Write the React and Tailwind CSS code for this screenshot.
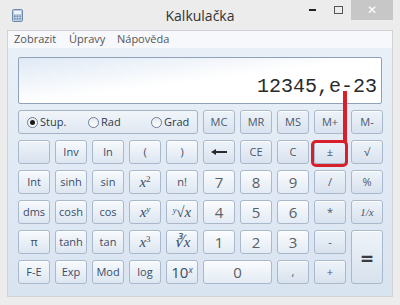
import React from 'react';

const ui = { fontFamily: '"Open Sans", "Noto Sans", sans-serif' };

const Btn = ({ children, kind = 'fn', className = '' }) => {
  const skin =
    kind === 'num'
      ? 'from-[#fbfcfe] to-[#e3ebf4] text-[#5a5f66] text-[15px]'
      : kind === 'op'
      ? 'from-[#eef3f9] to-[#d8e2ee] text-[#4a586a] text-[11px]'
      : 'from-[#f7fafd] to-[#dde6f1] text-[#3a4d66] text-[11px]';
  return (
    <div
      className={`flex items-center justify-center rounded-[3px] border border-[#a9b8ca] bg-linear-to-b shadow-[inset_0_1px_0_#ffffff] ${skin} ${className}`}
    >
      {children}
    </div>
  );
};

const Mx = ({ children }) => (
  <span className="text-[15px] italic text-[#3a4d66]" style={{ fontFamily: '"Liberation Serif", serif' }}>
    {children}
  </span>
);

const Radio = ({ on, label }) => (
  <div className="flex items-center gap-[2px]">
    <span className="flex h-[11px] w-[11px] items-center justify-center rounded-full border border-[#6d7f95] bg-linear-to-b from-[#e6ebf1] to-white">
      {on && <span className="h-[5px] w-[5px] rounded-full bg-[#1a1a1a]" />}
    </span>
    <span className="text-[11px] text-[#2b3a4d]">{label}</span>
  </div>
);

export default function App() {
  return (
    <div className="relative h-[305px] w-[400px] overflow-hidden bg-[#ececec]" style={ui}>
      {/* title bar */}
      <div className="relative flex h-[30px] items-center">
        <svg className="ml-[12px]" width="11" height="13" viewBox="0 0 11 13">
          <rect x="0.5" y="0.5" width="10" height="12" rx="1" fill="#b9cbe0" stroke="#6f8aa8" />
          <rect x="2" y="2" width="7" height="3" fill="#eef4fb" />
          <g fill="#6f8aa8">
            <rect x="2" y="6.5" width="1.5" height="1.5" /><rect x="4.7" y="6.5" width="1.5" height="1.5" /><rect x="7.4" y="6.5" width="1.5" height="1.5" />
            <rect x="2" y="9" width="1.5" height="1.5" /><rect x="4.7" y="9" width="1.5" height="1.5" /><rect x="7.4" y="9" width="1.5" height="1.5" />
          </g>
        </svg>
        <div className="absolute left-0 right-0 top-[5px] text-center text-[14px] text-[#333]">Kalkulačka</div>
        <div className="absolute right-[7px] top-0 flex h-[20px] items-start">
          <div className="flex h-[20px] w-[26px] items-center justify-center">
            <span className="h-[2px] w-[7px] bg-[#222]" />
          </div>
          <div className="flex h-[20px] w-[26px] items-center justify-center">
            <span className="h-[8px] w-[9px] border border-[#555]" />
          </div>
          <div className="flex h-[20px] w-[42px] items-center justify-center bg-[#c7c7c7] text-[12px] text-white">✕</div>
        </div>
      </div>

      {/* client area */}
      <div className="ml-[7px] h-[267px] w-[386px] border border-[#cfd3d8] bg-linear-to-b from-[#eaf0f8] to-[#d9e4f1]">
        <div className="flex h-[17px] items-center bg-[#f6f8fb] pl-[6px] text-[11px] text-[#555]">
          <span className="w-[55px]">Zobrazit</span>
          <span className="w-[48px]">Úpravy</span>
          <span>Nápověda</span>
        </div>
        <div className="px-[10px] pt-[9px]">
          <div className="flex h-[47px] items-end justify-end rounded-[2px] border border-[#8fa2ba] bg-linear-to-br from-[#dfe9f5] via-white to-white pb-[6px] pr-[4px]">
            <span className="text-[20px] leading-none text-[#2a2a2a]" style={{ fontFamily: '"Liberation Mono", "DejaVu Sans Mono", monospace' }}>
              12345,e-23
            </span>
          </div>
          <div className="mt-[6px] grid grid-cols-[repeat(10,32px)] grid-rows-[repeat(6,24px)] gap-x-[5px] gap-y-[6px]">
            <div className="col-span-5 flex items-center rounded-[3px] border border-[#a3b3c6] bg-linear-to-b from-[#f1f5fa] to-[#e0e8f2] pl-[8px]">
              <div className="w-[61px]"><Radio on label="Stup." /></div>
              <div className="w-[63px]"><Radio label="Rad" /></div>
              <Radio label="Grad" />
            </div>
            <Btn kind="op">MC</Btn>
            <Btn kind="op">MR</Btn>
            <Btn kind="op">MS</Btn>
            <Btn kind="op">M+</Btn>
            <Btn kind="op">M-</Btn>

            <Btn kind="op" />
            <Btn>Inv</Btn>
            <Btn>ln</Btn>
            <Btn>(</Btn>
            <Btn>)</Btn>
            <Btn kind="op">
              <svg width="16" height="6" viewBox="0 0 16 6">
                <path d="M0 3 L5 0 L5 2 L16 2 L16 4 L5 4 L5 6 Z" fill="#2a2a2a" />
              </svg>
            </Btn>
            <Btn kind="op">CE</Btn>
            <Btn kind="op">C</Btn>
            <Btn kind="op">±</Btn>
            <Btn kind="op">√</Btn>

            <Btn>Int</Btn>
            <Btn>sinh</Btn>
            <Btn>sin</Btn>
            <Btn><Mx>x<sup className="text-[9px] not-italic">2</sup></Mx></Btn>
            <Btn>n!</Btn>
            <Btn kind="num">7</Btn>
            <Btn kind="num">8</Btn>
            <Btn kind="num">9</Btn>
            <Btn kind="op">/</Btn>
            <Btn kind="op">%</Btn>

            <Btn>dms</Btn>
            <Btn>cosh</Btn>
            <Btn>cos</Btn>
            <Btn><Mx>x<sup className="text-[9px]">y</sup></Mx></Btn>
            <Btn><Mx><sup className="text-[8px]">y</sup>√x</Mx></Btn>
            <Btn kind="num">4</Btn>
            <Btn kind="num">5</Btn>
            <Btn kind="num">6</Btn>
            <Btn kind="op">*</Btn>
            <Btn kind="op"><span className="italic" style={{ fontFamily: '"Liberation Serif", serif' }}>1/x</span></Btn>

            <Btn>π</Btn>
            <Btn>tanh</Btn>
            <Btn>tan</Btn>
            <Btn><Mx>x<sup className="text-[9px] not-italic">3</sup></Mx></Btn>
            <Btn><Mx>∛x</Mx></Btn>
            <Btn kind="num">1</Btn>
            <Btn kind="num">2</Btn>
            <Btn kind="num">3</Btn>
            <Btn kind="op">-</Btn>
            <Btn kind="op" className="row-span-2"><span className="text-[22px] font-bold text-[#3a3a3a]">=</span></Btn>

            <Btn>F-E</Btn>
            <Btn>Exp</Btn>
            <Btn>Mod</Btn>
            <Btn>log</Btn>
            <Btn><span className="text-[15px] text-[#3a4d66]">10<sup className="text-[9px] italic">x</sup></span></Btn>
            <Btn kind="num" className="col-span-2">0</Btn>
            <Btn kind="op">,</Btn>
            <Btn kind="op">+</Btn>
          </div>
        </div>
      </div>

      {/* red annotation */}
      <div className="absolute left-[343px] top-[91px] h-[52px] w-[4px] bg-[#d8202b]" />
      <div className="absolute left-[311px] top-[140px] h-[27px] w-[37px] rounded-[5px] border-[3px] border-[#d8202b]" />
    </div>
  );
}
